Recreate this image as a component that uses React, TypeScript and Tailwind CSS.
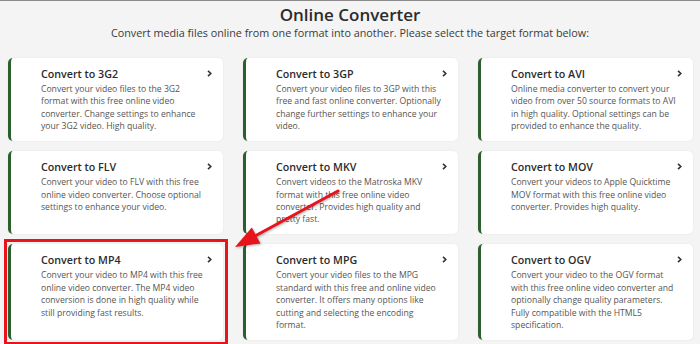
const converters = [
  {
    fmt: '3G2',
    text: 'Convert your video files to the 3G2 format with this free online video converter. Change settings to enhance your 3G2 video. High quality.',
  },
  {
    fmt: '3GP',
    text: 'Convert your video files to 3GP with this free and fast online converter. Optionally change further settings to enhance your video.',
  },
  {
    fmt: 'AVI',
    text: 'Online media converter to convert your video from over 50 source formats to AVI in high quality. Optional settings can be provided to enhance the quality.',
  },
  {
    fmt: 'FLV',
    text: 'Convert your video to FLV with this free online video converter. Choose optional settings to enhance your video.',
  },
  {
    fmt: 'MKV',
    text: 'Convert videos to the Matroska MKV format with this free online video converter. Provides high quality and pretty fast.',
  },
  {
    fmt: 'MOV',
    text: 'Convert your videos to Apple Quicktime MOV format with this free online video converter. Provides high quality.',
  },
  {
    fmt: 'MP4',
    text: 'Convert your video to MP4 with this free online video converter. The MP4 video conversion is done in high quality while still providing fast results.',
  },
  {
    fmt: 'MPG',
    text: 'Convert your video files to the MPG standard with this free and online video converter. It offers many options like cutting and selecting the encoding format.',
  },
  {
    fmt: 'OGV',
    text: 'Convert your video to the OGV format with this free online video converter and optionally change quality parameters. Fully compatible with the HTML5 specification.',
  },
]

function Chevron() {
  return (
    <svg width="5" height="7" viewBox="0 0 5 7" className="absolute top-[12px] right-[11px]">
      <path d="M1 0.8 L3.8 3.5 L1 6.2" fill="none" stroke="#333" strokeWidth="1.6" />
    </svg>
  )
}

export default function App() {
  return (
    <div className="relative w-[700px] h-[344px] overflow-hidden bg-[#f4f4f4] border-t border-[#8a8a8a] font-['Open_Sans',sans-serif]">
      <div className="text-center pt-[3px]">
        <h1 className="text-[17px] leading-[21px] font-semibold text-[#2b2b2b]">Online Converter</h1>
        <p className="text-[10.8px] leading-[16px] text-[#3a3a3a]">
          Convert media files online from one format into another. Please select the target format below:
        </p>
      </div>

      <div className="grid grid-cols-[215px_215px_215px] gap-x-[20px] gap-y-[10px] px-[8px] mt-[17px]">
        {converters.map((c) => (
          <div
            key={c.fmt}
            className="relative bg-white rounded-[5px] border-l-[3px] border-[#2b5f2c] shadow-[0_0_2px_rgba(0,0,0,0.08)] pl-[30px] pr-[15px] pt-[10px] pb-[8.6px]"
          >
            <div className="text-[10.7px] leading-[13px] font-semibold text-[#2b2b2b]">Convert to {c.fmt}</div>
            <p className="mt-[2px] text-[8.65px] leading-[12.4px] text-[#555]">{c.text}</p>
            <Chevron />
            {c.fmt === 'MP4' && (
              <div className="absolute -left-[7px] -top-[5px] -right-[5px] -bottom-[5px] border-[3px] border-[#e8141b]" />
            )}
          </div>
        ))}
      </div>

      {/* red annotation arrow */}
      <svg
        className="absolute inset-0 pointer-events-none"
        width="700"
        height="344"
        viewBox="0 0 700 344"
        style={{ filter: 'drop-shadow(1px 1px 1px rgba(0,0,0,0.3))' }}
      >
        <line x1="338" y1="190" x2="255" y2="235" stroke="#e8141b" strokeWidth="3" strokeLinecap="round" />
        <polygon points="235,246 251.8,226.6 260.4,242.4" fill="#e8141b" />
      </svg>
    </div>
  )
}
